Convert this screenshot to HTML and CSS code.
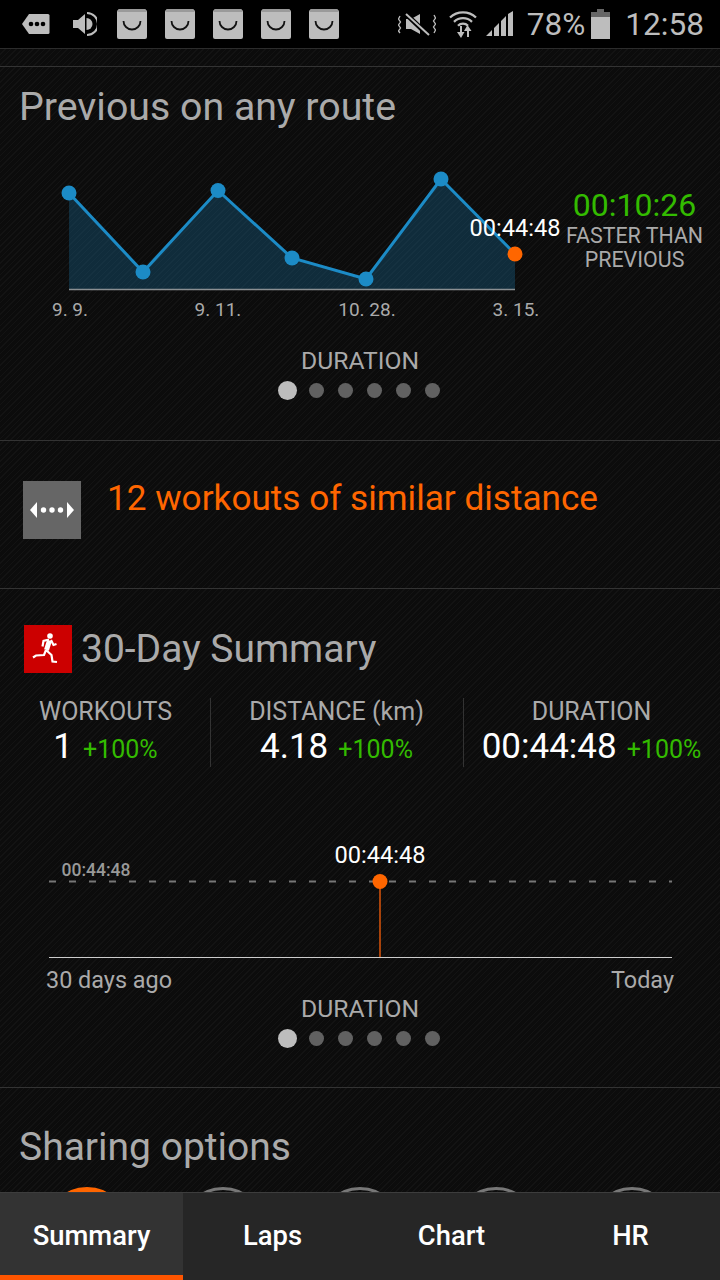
FILE: index.html
```html
<!DOCTYPE html>
<html lang="en">
<head>
<meta charset="utf-8">
<title>Workout summary</title>
<link rel="stylesheet" href="styles.css">
</head>
<body>
<div class="phone">
  <header class="status">
    <div class="status-left">
      <svg class="ic" width="28" height="22" viewBox="0 0 28 22"><path d="M7 1h19a1.500 1.500 0 0 1 1.500 1.500v17a1.500 1.500 0 0 1-1.500 1.500H7L0 11z" fill="#bdbdbd"/><circle cx="9" cy="11" r="2.300" fill="#000"/><circle cx="15" cy="11" r="2.300" fill="#000"/><circle cx="21" cy="11" r="2.300" fill="#000"/></svg>
      <svg class="ic ic-vol" width="24" height="24" viewBox="0 0 24 24"><path d="M0 8h5l7-6v20l-7-6H0z" fill="#bdbdbd"/><path d="M13.500 6a6 6 0 0 1 0 12z" fill="#bdbdbd"/><path d="M14 1a11 11 0 0 1 0 22" fill="none" stroke="#bdbdbd" stroke-width="2"/></svg>
      <svg class="bag" width="30" height="30" viewBox="0 0 30 30"><path d="M2 0h26l2 2v26a2 2 0 0 1-2 2H2a2 2 0 0 1-2-2V2z" fill="#bdbdbd"/><path d="M0 3 2 0h26l2 3z" fill="#9a9a9a"/><path d="M6.500 12a8.500 8.500 0 0 0 17 0" fill="none" stroke="#111" stroke-width="1.800"/></svg>
      <svg class="bag" width="30" height="30" viewBox="0 0 30 30"><path d="M2 0h26l2 2v26a2 2 0 0 1-2 2H2a2 2 0 0 1-2-2V2z" fill="#bdbdbd"/><path d="M0 3 2 0h26l2 3z" fill="#9a9a9a"/><path d="M6.500 12a8.500 8.500 0 0 0 17 0" fill="none" stroke="#111" stroke-width="1.800"/></svg>
      <svg class="bag" width="30" height="30" viewBox="0 0 30 30"><path d="M2 0h26l2 2v26a2 2 0 0 1-2 2H2a2 2 0 0 1-2-2V2z" fill="#bdbdbd"/><path d="M0 3 2 0h26l2 3z" fill="#9a9a9a"/><path d="M6.500 12a8.500 8.500 0 0 0 17 0" fill="none" stroke="#111" stroke-width="1.800"/></svg>
      <svg class="bag" width="30" height="30" viewBox="0 0 30 30"><path d="M2 0h26l2 2v26a2 2 0 0 1-2 2H2a2 2 0 0 1-2-2V2z" fill="#bdbdbd"/><path d="M0 3 2 0h26l2 3z" fill="#9a9a9a"/><path d="M6.500 12a8.500 8.500 0 0 0 17 0" fill="none" stroke="#111" stroke-width="1.800"/></svg>
      <svg class="bag" width="30" height="30" viewBox="0 0 30 30"><path d="M2 0h26l2 2v26a2 2 0 0 1-2 2H2a2 2 0 0 1-2-2V2z" fill="#bdbdbd"/><path d="M0 3 2 0h26l2 3z" fill="#9a9a9a"/><path d="M6.500 12a8.500 8.500 0 0 0 17 0" fill="none" stroke="#111" stroke-width="1.800"/></svg>
    </div>
    <div class="status-right">
      <svg class="ic-mute" width="38" height="24" viewBox="0 0 38 24"><path d="M8 7h5l9-5v20l-9-5H8z" fill="#bdbdbd"/><path d="M9 3l21 20" stroke="#000" stroke-width="5"/><path d="M8 2l23 21" stroke="#bdbdbd" stroke-width="2"/><path d="M2 4l-1.500 3 2 3-2 3 2 3-2 3 1.500 2M36 3l1.500 3-2 3 2 3-2 3 2 3-1.500 3" fill="none" stroke="#bdbdbd" stroke-width="1.300"/></svg>
      <svg class="ic-wifi" width="28" height="28" viewBox="0 0 28 28"><g fill="none" stroke="#bdbdbd" stroke-width="2.300"><path d="M1 7.500a19 19 0 0 1 26 0"/><path d="M5 11.800a13 13 0 0 1 18 0"/><path d="M9 15.800a7 7 0 0 1 10 0"/></g><path d="M11 16v6h-3l4 6 3.500-6h-2.500v-6z" fill="#bdbdbd"/><path d="M18 27v-6h-3l3.500-6 4 6h-2.500v6z" fill="#bdbdbd"/></svg>
      <svg class="ic-sig" width="27" height="26" viewBox="0 0 27 26"><path d="M0 25l6-6v6zM8 25v-8l5-5v13zM15 25V10l5-5v20zM22 25V3l5-3v25z" fill="#bdbdbd"/></svg>
      <span class="pct">78%</span>
      <svg class="ic-bat" width="19" height="30" viewBox="0 0 19 30"><path d="M0 3h6V0h7v3h6v7H0z" fill="#666"/><rect y="8" width="19" height="22" fill="#bdbdbd"/></svg>
      <span class="clock">12:58</span>
    </div>
  </header>

  <main class="content">
    <div class="strip"></div>

    <section class="route">
      <h2 class="heading">Previous on any route</h2>
      <div class="route-body">
        <svg class="route-chart" width="560" height="200" viewBox="0 0 560 200">
          <path class="area" d="M69 65 143 144 218 62.500 292 130 366 151 441 51 515 126V161.500H69z"/>
          <path class="line" d="M69 65 143 144 218 62.500 292 130 366 151 441 51 515 126"/>
          <path class="base" d="M69 161.500H515"/>
          <g class="pt">
            <circle cx="69" cy="65" r="7.500"/><circle cx="143" cy="144" r="7.500"/><circle cx="218" cy="62.500" r="7.500"/>
            <circle cx="292" cy="130" r="7.500"/><circle cx="366" cy="151" r="7.500"/><circle cx="441" cy="51" r="7.500"/>
          </g>
          <circle class="pt-now" cx="515" cy="126" r="7.500"/>
          <text class="val" x="515" y="108" text-anchor="middle">00:44:48</text>
          <g class="tick" text-anchor="middle">
            <text x="70" y="188">9. 9.</text><text x="218" y="188">9. 11.</text><text x="367" y="188">10. 28.</text><text x="516" y="188">3. 15.</text>
          </g>
        </svg>
        <div class="delta">
          <div class="delta-time">00:10:26</div>
          <div class="delta-label">FASTER THAN<br>PREVIOUS</div>
        </div>
      </div>
      <div class="caption">DURATION</div>
      <div class="dots"><i class="on"></i><i></i><i></i><i></i><i></i><i></i></div>
    </section>

    <section class="similar">
      <div class="dist-icon">
        <svg width="44" height="16" viewBox="0 0 44 16"><path d="M7 0v16L0 8zM37 0v16l7-8z" fill="#fff"/><circle cx="13.500" cy="8" r="2.700" fill="#fff"/><circle cx="22" cy="8" r="2.700" fill="#fff"/><circle cx="30.500" cy="8" r="2.700" fill="#fff"/></svg>
      </div>
      <div class="similar-text">12 workouts of similar distance</div>
    </section>

    <section class="summary">
      <div class="sum-head">
        <div class="run-icon">
          <svg width="48" height="48" viewBox="0 0 48 48"><circle cx="26" cy="11" r="2.800" fill="#fff"/><path d="M25.500 15.500 22.500 25" fill="none" stroke="#fff" stroke-width="5"/><path d="M25 14.500 19.500 16 18.500 21.500M27 15l2.500 5 3-1M22 25l5.500 5 1 6.500 4.500.5M22 25l-2 5-8 .5-3 2" fill="none" stroke="#fff" stroke-width="2.200"/></svg>
        </div>
        <h2 class="heading">30-Day Summary</h2>
      </div>
      <div class="stats">
        <div class="stat stat-a"><div class="stat-name">WORKOUTS</div><div class="stat-val"><b>1</b><span>+100%</span></div></div>
        <div class="stat stat-b"><div class="stat-name">DISTANCE (km)</div><div class="stat-val"><b>4.18</b><span>+100%</span></div></div>
        <div class="stat stat-c"><div class="stat-name">DURATION</div><div class="stat-val"><b>00:44:48</b><span>+100%</span></div></div>
      </div>
      <svg class="month-chart" width="720" height="168" viewBox="0 0 720 168">
        <path class="dash" d="M49 54.500H672"/>
        <path class="stem" d="M380 54V130"/>
        <path class="axis" d="M49 130.500H672"/>
        <circle class="pt-now" cx="380" cy="54.500" r="7.500"/>
        <text class="val" x="380" y="36" text-anchor="middle">00:44:48</text>
        <text class="ref" x="96" y="49" text-anchor="middle">00:44:48</text>
        <text class="range" x="46" y="161">30 days ago</text>
        <text class="range" x="674" y="161" text-anchor="end">Today</text>
      </svg>
      <div class="caption">DURATION</div>
      <div class="dots"><i class="on"></i><i></i><i></i><i></i><i></i><i></i></div>
    </section>

    <section class="sharing">
      <h2 class="heading">Sharing options</h2>
      <div class="share-row"><i class="main"></i><i></i><i></i><i></i><i></i></div>
    </section>
  </main>

  <nav class="tabs">
    <div class="tab active">Summary</div>
    <div class="tab">Laps</div>
    <div class="tab">Chart</div>
    <div class="tab">HR</div>
  </nav>
</div>
</body>
</html>
```

FILE: styles.css
```css
* { box-sizing: border-box; }
html, body { margin: 0; padding: 0; background: #000; }
.phone {
  width: 720px; height: 1280px; overflow: hidden; position: relative;
  display: flex; flex-direction: column;
  font-family: Roboto, "Liberation Sans", sans-serif; color: #aaa;
}
.status { height: 48px; flex: none; background: #000; display: flex; justify-content: space-between; align-items: center; }
.status-left { display: flex; align-items: center; padding-left: 22px; }
.status-left .ic { margin-right: 15px; }
.status-left .ic-vol { margin-right: 20px; margin-left: 8px; }
.bag { margin-right: 18px; }
.status-right { display: flex; align-items: center; padding-right: 16px; color: #bdbdbd; }
.ic-mute { margin-right: 13px; }
.ic-wifi { margin-right: 9px; }
.ic-sig { margin-right: 14px; }
.pct { font-size: 31.500px; margin-right: 6px; }
.ic-bat { margin-right: 15px; }
.clock { font-size: 31.600px; }

.content {
  flex: 1; min-height: 0; overflow: hidden;
  background-color: #0e0e0e;
  background-image: repeating-linear-gradient(135deg, #131313 0 1px, #0c0c0c 1px 4px);
}
.strip { height: 19px; border-top: 1px solid #2c2c2c; border-bottom: 1px solid #333; }
.heading { margin: 0; font-weight: 400; font-size: 39px; line-height: 42px; color: #aaa; }

.route { height: 374px; border-bottom: 1px solid #333; padding-top: 19px; }
.route > .heading { padding-left: 19px; font-size: 39.300px; }
.route-body { display: flex; height: 200px; margin-bottom: 19px; }
.route-chart { display: block; flex: none; }
.area { fill: rgba(28, 139, 198, 0.25); }
.line { fill: none; stroke: #1c8bc6; stroke-width: 3; }
.base { stroke: #8a8f92; stroke-width: 1.500; }
.pt circle { fill: #1c8bc6; }
.pt-now { fill: #ff6600; }
.val { font-size: 23.600px; fill: #fff; }
.tick text { font-size: 19px; fill: #aaa; }
.delta { flex: 1; text-align: center; padding-top: 59px; padding-right: 24px; margin-left: 6px; white-space: nowrap; }
.delta-time { font-size: 32px; line-height: 36px; color: #33bb00; }
.delta-label { font-size: 21.400px; line-height: 24px; margin-top: 1px; color: #aaa; }
.caption { text-align: center; font-size: 24.700px; line-height: 28px; color: #aaa; }
.dots { display: flex; justify-content: center; align-items: center; gap: 14px; margin-top: 6px; padding-right: 2px; }
.dots i { width: 15px; height: 15px; border-radius: 50%; background: #616161; }
.dots i.on { width: 19px; height: 19px; background: #bdbdbd; margin-right: -2px; }

.similar { height: 148px; border-bottom: 1px solid #333; display: flex; padding: 40px 0 0 23px; }
.dist-icon { width: 58px; height: 58px; background: #666; display: flex; align-items: center; justify-content: center; flex: none; }
.similar-text { font-size: 35.150px; line-height: 40px; color: #ff6600; margin-left: 26px; margin-top: -3px; }

.summary { height: 499px; border-bottom: 1px solid #333; padding-top: 36px; }
.sum-head { display: flex; align-items: center; padding-left: 24px; height: 48px; }
.sum-head .heading { margin-left: 9px; }
.run-icon { width: 48px; height: 48px; background: #cc0000; flex: none; }
.run-icon svg { display: block; }
.stats { display: flex; margin-top: 25px; height: 69px; }
.stat { text-align: center; flex: none; }
.stat-a { width: 211px; padding-left: 1px; border-right: 1px solid #333; }
.stat-b { width: 253px; border-right: 1px solid #333; padding-right: 1px; }
.stat-c { flex: 1; padding-right: 1px; }
.stat-name { font-size: 25px; line-height: 28px; color: #aaa; }
.stat-val { line-height: 42px; white-space: nowrap; }
.stat-val b { font-weight: 400; font-size: 35px; color: #fff; }
.stat-val span { font-size: 25px; color: #33bb00; margin-left: 10px; }
.month-chart { display: block; margin-top: 60px; }
.dash { stroke: #777; stroke-width: 2; stroke-dasharray: 7 13; fill: none; }
.stem { stroke: #a8430b; stroke-width: 2; }
.axis { stroke: #ccc; stroke-width: 1.200; }
.ref { font-size: 17.500px; font-weight: 500; fill: #999; }
.range { font-size: 23.400px; fill: #aaa; }

.sharing { padding-top: 38px; padding-left: 19px; }
.share-row { height: 60px; display: flex; margin-left: 26px; margin-top: 19px; gap: 52.250px; }
.share-row i { width: 84px; height: 84px; flex: none; border-radius: 50%; border: 3px solid #777; }
.share-row i.main { background: #ff6600; border-color: #ff6600; }

.tabs {
  position: absolute; left: 0; right: 0; bottom: 0; height: 88px;
  background: #262626; border-top: 1px solid #3d3d3d; display: flex;
}
.tab { flex: 0 0 179px; display: flex; align-items: center; justify-content: center; color: #fff; font-size: 27.400px; font-weight: 500; padding-bottom: 2px; }
.tab.active { flex-basis: 183px; background: #333; border-bottom: 5px solid #ff5500; padding-bottom: 0; padding-top: 3px; }
```
